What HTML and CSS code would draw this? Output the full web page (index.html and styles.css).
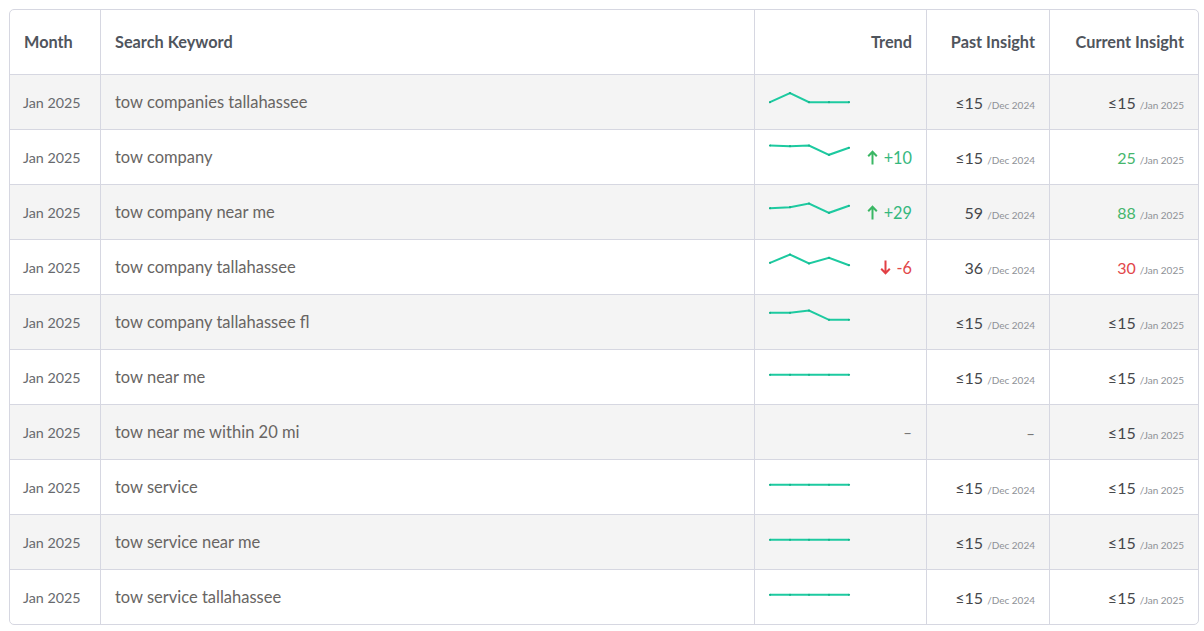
FILE: index.html
```html
<!DOCTYPE html>
<html>
<head>
<meta charset="utf-8">
<link rel="stylesheet" href="styles.css">
</head>
<body>
<div class="wrap">
<table class="kw">
  <colgroup>
    <col class="c-month"><col class="c-kw"><col class="c-trend"><col class="c-past"><col class="c-cur">
  </colgroup>
  <thead>
    <tr>
      <th class="l">Month</th>
      <th class="l">Search Keyword</th>
      <th class="r">Trend</th>
      <th class="r">Past Insight</th>
      <th class="r">Current Insight</th>
    </tr>
  </thead>
  <tbody>
    <tr class="odd">
      <td class="month">Jan 2025</td>
      <td class="kwd">tow companies tallahassee</td>
      <td class="trend"><div class="tr">
        <svg class="spark" width="84" height="30" viewBox="0 0 84 30"><polyline points="1,15.2 21,6.2 40,15.2 60,15.2 80,15.2"/><g><circle cx="1" cy="15.2" r="1.1"/><circle cx="21" cy="6.2" r="1.1"/><circle cx="40" cy="15.2" r="1.1"/><circle cx="60" cy="15.2" r="1.1"/><circle cx="80" cy="15.2" r="1.1"/></g></svg>
      </div></td>
      <td class="num"><span class="v">≤15</span><span class="d">/Dec 2024</span></td>
      <td class="num"><span class="v">≤15</span><span class="d">/Jan 2025</span></td>
    </tr>
    <tr>
      <td class="month">Jan 2025</td>
      <td class="kwd">tow company</td>
      <td class="trend"><div class="tr">
        <svg class="spark" width="84" height="30" viewBox="0 0 84 30"><polyline points="1,3.5 21,4.2 40,3.5 60,12.8 80,5.8"/><g><circle cx="1" cy="3.5" r="1.1"/><circle cx="21" cy="4.2" r="1.1"/><circle cx="40" cy="3.5" r="1.1"/><circle cx="60" cy="12.8" r="1.1"/><circle cx="80" cy="5.8" r="1.1"/></g></svg>
        <span class="delta up"><svg class="arr" width="11" height="15" viewBox="0 0 11 15"><path d="M5.5 14.5V1.8M1.2 6.2L5.5 1.8L9.8 6.2"/></svg>+10</span>
      </div></td>
      <td class="num"><span class="v">≤15</span><span class="d">/Dec 2024</span></td>
      <td class="num"><span class="v g">25</span><span class="d">/Jan 2025</span></td>
    </tr>
    <tr class="odd">
      <td class="month">Jan 2025</td>
      <td class="kwd">tow company near me</td>
      <td class="trend"><div class="tr">
        <svg class="spark" width="84" height="30" viewBox="0 0 84 30"><polyline points="1,11.2 21,10.2 40,6.5 60,15.8 80,8.8"/><g><circle cx="1" cy="11.2" r="1.1"/><circle cx="21" cy="10.2" r="1.1"/><circle cx="40" cy="6.5" r="1.1"/><circle cx="60" cy="15.8" r="1.1"/><circle cx="80" cy="8.8" r="1.1"/></g></svg>
        <span class="delta up"><svg class="arr" width="11" height="15" viewBox="0 0 11 15"><path d="M5.5 14.5V1.8M1.2 6.2L5.5 1.8L9.8 6.2"/></svg>+29</span>
      </div></td>
      <td class="num"><span class="v">59</span><span class="d">/Dec 2024</span></td>
      <td class="num"><span class="v g">88</span><span class="d">/Jan 2025</span></td>
    </tr>
    <tr>
      <td class="month">Jan 2025</td>
      <td class="kwd">tow company tallahassee</td>
      <td class="trend"><div class="tr">
        <svg class="spark" width="84" height="30" viewBox="0 0 84 30"><polyline points="1,10.8 21,2.5 40,11.5 60,5.8 80,13.2"/><g><circle cx="1" cy="10.8" r="1.1"/><circle cx="21" cy="2.5" r="1.1"/><circle cx="40" cy="11.5" r="1.1"/><circle cx="60" cy="5.8" r="1.1"/><circle cx="80" cy="13.2" r="1.1"/></g></svg>
        <span class="delta down"><svg class="arr" width="11" height="15" viewBox="0 0 11 15"><path d="M5.5 0.5V13.2M1.2 8.8L5.5 13.2L9.8 8.8"/></svg>-6</span>
      </div></td>
      <td class="num"><span class="v">36</span><span class="d">/Dec 2024</span></td>
      <td class="num"><span class="v r">30</span><span class="d">/Jan 2025</span></td>
    </tr>
    <tr class="odd">
      <td class="month">Jan 2025</td>
      <td class="kwd">tow company tallahassee fl</td>
      <td class="trend"><div class="tr">
        <svg class="spark" width="84" height="30" viewBox="0 0 84 30"><polyline points="1,5.8 21,5.8 40,3.5 60,12.8 80,12.8"/><g><circle cx="1" cy="5.8" r="1.1"/><circle cx="21" cy="5.8" r="1.1"/><circle cx="40" cy="3.5" r="1.1"/><circle cx="60" cy="12.8" r="1.1"/><circle cx="80" cy="12.8" r="1.1"/></g></svg>
      </div></td>
      <td class="num"><span class="v">≤15</span><span class="d">/Dec 2024</span></td>
      <td class="num"><span class="v">≤15</span><span class="d">/Jan 2025</span></td>
    </tr>
    <tr>
      <td class="month">Jan 2025</td>
      <td class="kwd">tow near me</td>
      <td class="trend"><div class="tr">
        <svg class="spark" width="84" height="30" viewBox="0 0 84 30"><polyline points="1,12.8 21,12.8 40,12.8 60,12.8 80,12.8"/><g><circle cx="1" cy="12.8" r="1.1"/><circle cx="21" cy="12.8" r="1.1"/><circle cx="40" cy="12.8" r="1.1"/><circle cx="60" cy="12.8" r="1.1"/><circle cx="80" cy="12.8" r="1.1"/></g></svg>
      </div></td>
      <td class="num"><span class="v">≤15</span><span class="d">/Dec 2024</span></td>
      <td class="num"><span class="v">≤15</span><span class="d">/Jan 2025</span></td>
    </tr>
    <tr class="odd">
      <td class="month">Jan 2025</td>
      <td class="kwd">tow near me within 20 mi</td>
      <td class="trend"><div class="tr end"><span class="dash">–</span></div></td>
      <td class="num"><span class="dash">–</span></td>
      <td class="num"><span class="v">≤15</span><span class="d">/Jan 2025</span></td>
    </tr>
    <tr>
      <td class="month">Jan 2025</td>
      <td class="kwd">tow service</td>
      <td class="trend"><div class="tr">
        <svg class="spark" width="84" height="30" viewBox="0 0 84 30"><polyline points="1,12.8 21,12.8 40,12.8 60,12.8 80,12.8"/><g><circle cx="1" cy="12.8" r="1.1"/><circle cx="21" cy="12.8" r="1.1"/><circle cx="40" cy="12.8" r="1.1"/><circle cx="60" cy="12.8" r="1.1"/><circle cx="80" cy="12.8" r="1.1"/></g></svg>
      </div></td>
      <td class="num"><span class="v">≤15</span><span class="d">/Dec 2024</span></td>
      <td class="num"><span class="v">≤15</span><span class="d">/Jan 2025</span></td>
    </tr>
    <tr class="odd">
      <td class="month">Jan 2025</td>
      <td class="kwd">tow service near me</td>
      <td class="trend"><div class="tr">
        <svg class="spark" width="84" height="30" viewBox="0 0 84 30"><polyline points="1,12.8 21,12.8 40,12.8 60,12.8 80,12.8"/><g><circle cx="1" cy="12.8" r="1.1"/><circle cx="21" cy="12.8" r="1.1"/><circle cx="40" cy="12.8" r="1.1"/><circle cx="60" cy="12.8" r="1.1"/><circle cx="80" cy="12.8" r="1.1"/></g></svg>
      </div></td>
      <td class="num"><span class="v">≤15</span><span class="d">/Dec 2024</span></td>
      <td class="num"><span class="v">≤15</span><span class="d">/Jan 2025</span></td>
    </tr>
    <tr>
      <td class="month">Jan 2025</td>
      <td class="kwd">tow service tallahassee</td>
      <td class="trend"><div class="tr">
        <svg class="spark" width="84" height="30" viewBox="0 0 84 30"><polyline points="1,12.8 21,12.8 40,12.8 60,12.8 80,12.8"/><g><circle cx="1" cy="12.8" r="1.1"/><circle cx="21" cy="12.8" r="1.1"/><circle cx="40" cy="12.8" r="1.1"/><circle cx="60" cy="12.8" r="1.1"/><circle cx="80" cy="12.8" r="1.1"/></g></svg>
      </div></td>
      <td class="num"><span class="v">≤15</span><span class="d">/Dec 2024</span></td>
      <td class="num"><span class="v">≤15</span><span class="d">/Jan 2025</span></td>
    </tr>
  </tbody>
</table>
</div>
</body>
</html>
```

FILE: styles.css
```css
* { box-sizing: border-box; }
html, body { margin: 0; background: #fff; }
body {
  padding: 9px;
  font-family: "Lato", "Open Sans", "Liberation Sans", sans-serif;
  color: #555;
}
.wrap {
  width: 1190px;
  border: 1px solid #d6d7e1;
  border-radius: 5px;
  overflow: hidden;
}
.kw {
  width: 1188px;
  table-layout: fixed;
  border-collapse: separate;
  border-spacing: 0;
}
.c-month { width: 90px; }
.c-kw { width: 654px; }
.c-trend { width: 172px; }
.c-past { width: 123px; }
.c-cur { width: 149px; }

.kw th, .kw td {
  padding: 0 14px;
  vertical-align: middle;
  border-left: 1px solid #d6d7e1;
  white-space: nowrap;
}
.kw th:first-child, .kw td:first-child { border-left: none; }
.kw th {
  height: 64px;
  font-size: 16.3px;
  font-weight: 700;
  color: #50555d;
  padding-bottom: 2px;
}
.kw th.l { text-align: left; }
.kw th.r { text-align: right; }
.kw td {
  height: 55px;
  border-top: 1px solid #d6d7e1;
}
.kw tr.odd td { background: #f4f4f4; }

.month { font-size: 14.3px; color: #676a6e; padding-left: 13px !important; }
.kwd { font-size: 16.5px; color: #686563; padding-bottom: 1px !important; }

.tr {
  display: flex;
  align-items: center;
  justify-content: space-between;
}
.tr.end { justify-content: flex-end; }
.spark { display: block; }
.spark polyline {
  fill: none;
  stroke: #1dcaa0;
  stroke-width: 2;
}
.spark circle { fill: #14b48c; }

.delta {
  display: flex;
  align-items: center;
  gap: 6px;
  font-size: 16.3px;
}
.delta.up { color: #35b87e; }
.delta.down { color: #e2474a; }
.arr { display: block; }
.arr path { fill: none; stroke-width: 2; }
.delta.up .arr path { stroke: #3ab764; }
.delta.down .arr path { stroke: #e23f44; }

.num { text-align: right; }
.v { font-size: 16px; color: #45474b; }
.v.g { color: #45b66c; }
.v.r { color: #e2474a; }
.d { font-size: 10px; color: #8e9196; margin-left: 4px; }
.dash { font-size: 15px; color: #777; }
```
